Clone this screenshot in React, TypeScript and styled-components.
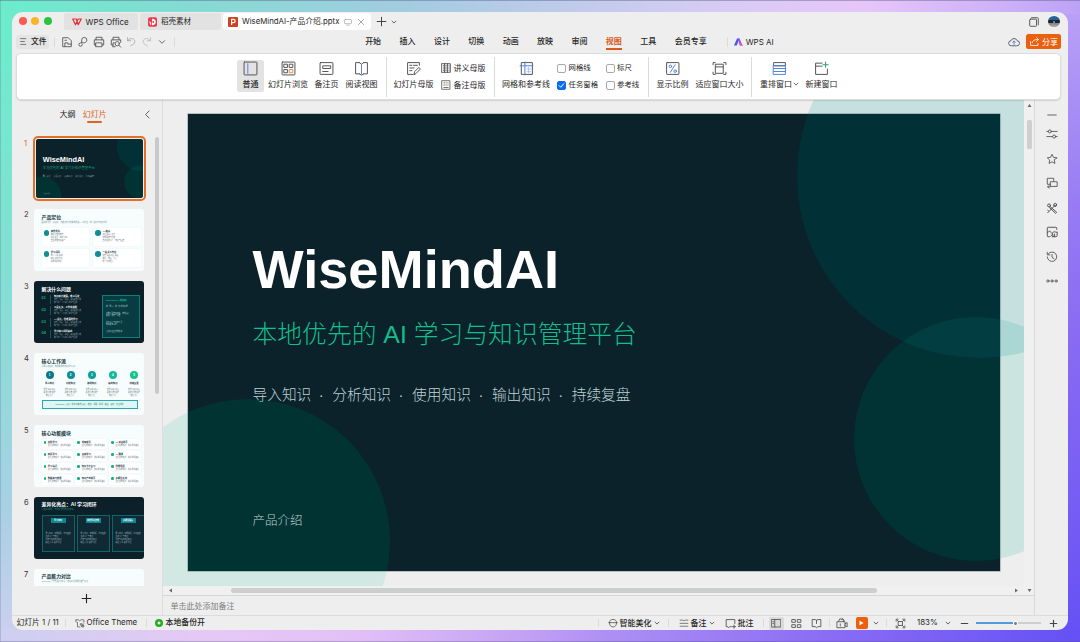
import React from "react";
import styled, { createGlobalStyle, css } from "styled-components";

const UI = `Inter, "Noto Sans CJK SC", sans-serif`;
const SLIDE = `"Liberation Sans", "Noto Sans CJK SC", sans-serif`;

const Global = createGlobalStyle`
  html, body { margin: 0; padding: 0; overflow: hidden; }
  *, *::before, *::after { box-sizing: border-box; }
  body { font-family: ${UI}; font-size: 8px; line-height: 1; color: #262626; }
`;

/* ---------- shell ---------- */

const Desktop = styled.div`
  width: 1080px;
  height: 642px;
  padding: 12px;
  box-shadow: inset 0 1px 0 rgba(90, 100, 130, 0.45), inset 1px 0 0 rgba(90, 100, 130, 0.25),
    inset 0 -1px 0 rgba(90, 80, 130, 0.35);
  background:
    linear-gradient(90deg, #6beccb 0%, #82dcd2 16%, #a2cce0 37%, #c0cbec 53%, #d8cbf5 67%, #e6c6fa 80%, #cdb0f8 93%, #bca2f7 100%) 0 0 / 100% 14px no-repeat,
    linear-gradient(90deg, #cdd0f0 0%, #e6c8f5 20%, #e2c0f6 33%, #c4a2f4 48%, #ae90f4 56%, #8f70f4 74%, #6450f5 100%) 0 100% / 100% 14px no-repeat,
    linear-gradient(180deg, #6beccb 0%, #74e8cf 16%, #82dfd2 42%, #9ad6de 67%, #a9d0e4 80%, #cdd0f0 100%) 0 0 / 50% 100% no-repeat,
    linear-gradient(180deg, #bca2f7 0%, #a88ff5 16%, #977af4 33%, #8a6df3 50%, #7058f4 87%, #6450f5 100%) 100% 0 / 50% 100% no-repeat;
`;

const Window = styled.div`
  width: 1056px;
  height: 618px;
  display: flex;
  flex-direction: column;
  overflow: hidden;
  border-radius: 11px;
  background: #eeeeee;
  white-space: nowrap;
`;

const Icon = styled.svg.attrs<{ $s?: number }>((p) => ({
  viewBox: "0 0 14 14",
  width: p.$s ?? 12,
  height: p.$s ?? 12,
}))<{ $s?: number; $w?: number; $c?: string }>`
  display: block;
  flex: none;
  fill: none;
  stroke: ${(p) => p.$c ?? "#505050"};
  stroke-width: ${(p) => p.$w ?? 1};
  stroke-linecap: round;
  stroke-linejoin: round;
`;

const Chevron = ({ s = 6 }: { s?: number }) => (
  <Icon $s={s} $w={2}>
    <path d="M2.500 5l4.500 4.500L11.500 5" />
  </Icon>
);

const Divider = styled.i<{ $h?: number; $m?: string }>`
  flex: none;
  width: 1px;
  height: ${(p) => p.$h ?? 10}px;
  margin: ${(p) => p.$m ?? "0"};
  background: #dbdbdb;
`;

/* ---------- tab strip ---------- */

const TabStrip = styled.div`
  height: 18px;
  flex: none;
  display: flex;
  align-items: center;
  padding-left: 7px;
  padding-top: 1px;
`;

const Lights = styled.div`
  width: 45px;
  flex: none;
  display: flex;
  gap: 4.3px;
`;

const Light = styled.i<{ $c: string }>`
  width: 8px;
  height: 8px;
  margin-top: -1.5px;
  border-radius: 50%;
  background: ${(p) => p.$c};
`;

const Tab = styled.div<{ $w: number; $active?: boolean; $size?: number }>`
  width: ${(p) => p.$w}px;
  height: 17px;
  margin-right: 2px;
  padding-left: ${(p) => (p.$active ? 5 : 7.5)}px;
  display: flex;
  align-items: center;
  border-radius: ${(p) => (p.$active ? "4px" : "2px")};
  background: ${(p) => (p.$active ? "#ffffff" : "#e2e2e2")};
  font-size: ${(p) => p.$size ?? 8}px;
  & > svg { flex: none; }
`;

const TabText = styled.span<{ $w: number }>`
  width: ${(p) => p.$w}px;
  margin-left: 4px;
`;

const TabTools = styled.span`
  display: flex;
  align-items: center;
  gap: 5.5px;
  margin-left: 3.5px;
`;

const StripTools = styled.div`
  display: flex;
  align-items: center;
  gap: 4px;
  margin-left: 3px;
`;

const StripRight = styled.div`
  margin-left: auto;
  margin-right: 8px;
  display: flex;
  align-items: center;
  gap: 9px;
`;

const Avatar = styled.i`
  width: 12px;
  height: 11px;
  border-radius: 50%;
  background: radial-gradient(circle at 50% 55%, #6e8090 0 10%, transparent 14%),
    linear-gradient(180deg, #2b5f98 0 35%, #16283c 36% 62%, #8a8280 66%, #b3a9a4 100%);
`;

/* ---------- menu bar ---------- */

const MenuBar = styled.div`
  height: 23px;
  flex: none;
  display: flex;
  align-items: center;
  padding: 0 7px 0 4px;
`;

const FileButton = styled.div`
  width: 33px;
  height: 14px;
  padding-left: 3px;
  display: flex;
  align-items: center;
  gap: 3px;
  border-radius: 3px;
  background: #e4e4e4;
  font-size: 7.8px;
  font-weight: 500;
`;

const QuickTools = styled.div`
  display: flex;
  align-items: center;
  gap: 4.2px;
`;

const Menus = styled.div`
  display: flex;
  align-items: center;
  gap: 18.4px;
  margin-left: 190px;
`;

const Menu = styled.span<{ $active?: boolean }>`
  height: 16px;
  display: flex;
  align-items: center;
  font-weight: 500;
  border-top: 1.5px solid transparent;
  border-bottom: 2px solid transparent;
  ${(p) =>
    p.$active &&
    css`
      color: #d9591a;
      font-weight: 700;
      border-bottom-color: #d9591a;
    `}
`;

const AiEntry = styled.span`
  display: flex;
  align-items: center;
  gap: 3px;
  font-size: 8px;
`;

const MenuRight = styled.div`
  margin-left: auto;
  display: flex;
  align-items: center;
  gap: 6px;
`;

const ShareButton = styled.div`
  width: 35px;
  height: 15px;
  display: flex;
  align-items: center;
  justify-content: center;
  gap: 2px;
  border-radius: 2.5px;
  background: #ea600f;
  color: #fff;
`;

/* ---------- ribbon ---------- */

const Ribbon = styled.div`
  height: 47px;
  flex: none;
  margin: 0 7px 0 4px;
  padding-left: 220px;
  display: flex;
  align-items: center;
  border: 1px solid #dcdcdc;
  border-radius: 5px;
  background: #fff;
  box-shadow: 0 1px 1.5px rgba(0, 0, 0, 0.12);
  position: relative;
  z-index: 2;
`;

const RibbonButton = styled.div<{ $w: number; $ml?: number; $active?: boolean }>`
  width: ${(p) => p.$w}px;
  height: 32px;
  flex: none;
  margin: -1px 0 0 ${(p) => p.$ml ?? 0}px;
  padding-top: 1px;
  display: flex;
  flex-direction: column;
  align-items: center;
  gap: 1.5px;
  border-radius: 2.5px;
  background: ${(p) => (p.$active ? "#e3e3e3" : "transparent")};
  font-weight: ${(p) => (p.$active ? 500 : 400)};
`;

const RibbonLabel = styled.span`
  height: 12px;
  display: flex;
  align-items: center;
  gap: 1px;
`;

const RibbonStack = styled.div<{ $w: number; $ml?: number }>`
  width: ${(p) => p.$w}px;
  margin-left: ${(p) => p.$ml ?? 0}px;
  flex: none;
  display: flex;
  flex-direction: column;
  gap: 5px;
`;

const StackItem = styled.div<{ $size?: number }>`
  height: 12px;
  display: flex;
  align-items: center;
  gap: 2.5px;
  font-size: ${(p) => p.$size ?? 8}px;
`;

const Check = styled.i<{ $on?: boolean }>`
  width: 9px;
  height: 9px;
  display: flex;
  align-items: center;
  justify-content: center;
  border-radius: 2px;
  border: 1px solid ${(p) => (p.$on ? "#0a6cf0" : "#a8a8a8")};
  background: ${(p) => (p.$on ? "#0a6cf0" : "#fff")};
`;

/* ---------- body ---------- */

const Body = styled.div`
  height: 515px;
  flex: none;
  display: flex;
`;

const SlidePanel = styled.aside`
  width: 151px;
  flex: none;
  display: flex;
  flex-direction: column;
  border-right: 1px solid #dedede;
`;

const PanelHeader = styled.div`
  height: 36px;
  flex: none;
  display: flex;
  align-items: flex-start;
  gap: 7px;
  padding: 8px 0 0 47px;
`;

const PanelTab = styled.span<{ $w: number; $active?: boolean }>`
  width: ${(p) => p.$w}px;
  height: 14px;
  display: flex;
  flex-direction: column;
  align-items: center;
  gap: 0.5px;
  line-height: 12.5px;
  color: ${(p) => (p.$active ? "#dc651f" : "#262626")};
  &::after {
    content: "";
    width: 15px;
    height: 2px;
    flex: none;
    border-radius: 1px;
    background: ${(p) => (p.$active ? "#dc651f" : "transparent")};
  }
`;

const PanelCollapse = styled.span`
  margin: 2px 0 0 29px;
`;

const ThumbScroller = styled.div`
  height: 450px;
  flex: none;
  display: flex;
  overflow: hidden;
`;

const ThumbList = styled.div`
  width: 141px;
  height: 450px;
  overflow: hidden;
  display: flex;
  flex-direction: column;
`;

const ThumbRow = styled.div`
  height: 71.9px;
  flex: none;
  display: flex;
  padding-left: 12px;
`;

const ThumbNo = styled.span<{ $active?: boolean }>`
  width: 8.5px;
  padding-top: 3.5px;
  font-size: 7.5px;
  color: ${(p) => (p.$active ? "#dc651f" : "#333")};
`;

const ThumbFrame = styled.div<{ $active?: boolean }>`
  width: 113px;
  height: 65px;
  flex: none;
  padding: ${(p) => (p.$active ? "1px" : "1.5px")};
  border-radius: 5px;
  border: ${(p) => (p.$active ? "2px solid #e2702a" : "0")};
`;

const ThumbPage = styled.div<{ $dark?: boolean }>`
  width: 100%;
  height: 100%;
  overflow: hidden;
  border-radius: 3px;
  font-family: ${SLIDE};
  background: ${(p) => (p.$dark ? "#0b2029" : "#f6fdfc")};
  color: ${(p) => (p.$dark ? "#ffffff" : "#12303a")};
  padding: 5.5px 3px 0 7.5px;
  display: flex;
  flex-direction: column;
`;

const ThumbCover = styled(ThumbPage)`
  padding: 0;
  background: #0b222a;
`;

const CoverScale = styled.div`
  width: 812px;
  height: 457px;
  margin: -1.5px 0 0 -2px;
  transform: scale(0.1354);
  transform-origin: 0 0;
`;

const PanelScrollbar = styled.i`
  width: 4px;
  height: 257px;
  margin: 1px 0 0 1.5px;
  border-radius: 2px;
  background: #c9c9c9;
`;

const AddSlide = styled.div`
  height: 25px;
  padding-right: 2px;
  display: flex;
  align-items: center;
  justify-content: center;
`;

/* ---------- thumbnail contents ---------- */

const TTitle = styled.div`
  font-size: 4.9px;
  line-height: 6px;
  height: 6px;
  font-weight: 700;
`;
const TSub = styled.div<{ $c?: string }>`
  height: 3px;
  line-height: 3px;
  font-size: 1.9px;
  color: ${(p) => p.$c ?? "#6d8a8e"};
`;
const THead = styled.div<{ $c?: string }>`
  font-size: 2.3px;
  line-height: 3px;
  font-weight: 700;
  color: ${(p) => p.$c ?? "inherit"};
`;
const TLine = styled.div<{ $c?: string; $lh?: number }>`
  font-size: 1.8px;
  line-height: ${(p) => p.$lh ?? 2.9}px;
  color: ${(p) => p.$c ?? "#5d7276"};
`;

const TGrid = styled.div<{ $cols: number; $gap: string; $mt: number; $rows: string }>`
  display: grid;
  grid-template-columns: repeat(${(p) => p.$cols}, 1fr);
  grid-auto-rows: ${(p) => p.$rows};
  gap: ${(p) => p.$gap};
  margin-top: ${(p) => p.$mt}px;
`;
const TCard = styled.div`
  display: flex;
  gap: 1.8px;
  padding: 2.5px 2px;
  overflow: hidden;
  background: #fff;
  box-shadow: 0 0 1px rgba(20, 120, 120, 0.18);
  border-radius: 1px;
`;
const TDot = styled.i<{ $s: number; $c: string }>`
  width: ${(p) => p.$s}px;
  height: ${(p) => p.$s}px;
  flex: none;
  border-radius: 50%;
  background: ${(p) => p.$c};
`;

const TSplit = styled.div`
  display: flex;
  justify-content: space-between;
  margin-top: 2px;
  padding-right: 1px;
`;
const TProblems = styled.div`
  display: flex;
  flex-direction: column;
  gap: 2.6px;
`;
const TProblem = styled.div`
  height: 9px;
  display: flex;
  align-items: center;
`;
const TIndex = styled.b`
  width: 8.5px;
  font-size: 3.8px;
  color: #10b08e;
`;
const TProblemText = styled.div`
  padding-left: 3px;
  border-left: 0.5px solid #1c5560;
`;
const TAside = styled.div`
  width: 38px;
  height: 43px;
  display: flex;
  flex-direction: column;
  gap: 3.2px;
  padding: 3.5px 3px;
  border: 0.7px solid #0e7d7b;
  background: #073c42;
`;

const TFlow = styled.div`
  display: flex;
  justify-content: space-between;
  margin: 3.7px -3px 0 -2px;
`;
const TStep = styled.div`
  width: 20px;
  display: flex;
  flex-direction: column;
  align-items: center;
  overflow: hidden;
`;
const TBall = styled.i<{ $c: string }>`
  width: 8px;
  height: 8px;
  margin-bottom: 3px;
  border-radius: 50%;
  background: ${(p) => p.$c};
  color: #fff;
  font: 700 3px/8px ${SLIDE};
  text-align: center;
`;
const TBanner = styled.div`
  width: 96px;
  height: 9px;
  margin-top: 3.5px;
  display: flex;
  align-items: center;
  justify-content: center;
  border: 0.8px solid #2aa8ab;
  background: #dff6f4;
  font-size: 1.9px;
  color: #0f7a80;
`;
const TPanels = styled.div`
  display: flex;
  gap: 2px;
  margin-top: 3.5px;
  margin-right: -3px;
`;
const TPanel = styled.div`
  width: 33px;
  height: 37px;
  flex: none;
  padding: 2.5px 3px;
  border: 0.7px solid #0d6668;
  background: #102a35;
`;
const TPill = styled.div`
  width: 15px;
  height: 4.5px;
  margin: 0 auto 9px;
  background: #0b8791;
  font-size: 2px;
  line-height: 4.5px;
  font-weight: 700;
  text-align: center;
`;

/* ---------- canvas ---------- */

const Center = styled.main`
  width: 872px;
  flex: none;
  display: flex;
  flex-direction: column;
  border-right: 1px solid #d9d9d9;
`;

const Stage = styled.div`
  height: 486px;
  flex: none;
  display: flex;
`;

const Canvas = styled.div`
  width: 861px;
  height: 486px;
  overflow: hidden;
  padding: 14px 0 0 24.5px;
`;

const SlideBox = styled.section`
  position: relative;
  width: 812px;
  height: 457px;
  padding: 122.5px 0 0 65px;
  display: flex;
  flex-direction: column;
  font-family: ${SLIDE};
`;

/* Decorative discs overlap the slide edge and spill onto the pasteboard. */
const Disc = styled.i<{ $x: number; $y: number; $r: number; $c: string }>`
  position: absolute;
  left: ${(p) => p.$x - p.$r}px;
  top: ${(p) => p.$y - p.$r}px;
  width: ${(p) => p.$r * 2}px;
  height: ${(p) => p.$r * 2}px;
  overflow: hidden;
  border-radius: 50%;
  background: ${(p) => p.$c};
`;

const Backdrop = styled.div<{ $edge?: boolean }>`
  position: absolute;
  inset: 0;
  overflow: hidden;
  background: #0b222a;
  box-shadow: ${(p) => (p.$edge ? "0 0 0 0.6px rgba(90,110,115,.6)" : "none")};
`;

const CoverTitle = styled.h1`
  position: relative;
  margin: 0;
  height: 64px;
  font-size: 54.2px;
  line-height: 64px;
  font-weight: 700;
  color: #fff;
`;
const CoverSub = styled.p`
  position: relative;
  margin: 17px 0 0;
  height: 34px;
  font-size: 24.8px;
  line-height: 34px;
  font-weight: 300;
  color: #12bd8e;
`;
const CoverTags = styled.p`
  position: relative;
  display: flex;
  margin: 33px 0 0;
  height: 22px;
  font-size: 14.7px;
  line-height: 21px;
  font-weight: 300;
  color: #bdd1d5;
`;
const CoverTag = styled.span`
  width: 79.8px;
  display: flex;
  &:not(:last-child)::after {
    content: "·";
    width: 20px;
    text-align: center;
  }
`;
const CoverFoot = styled.p`
  position: relative;
  margin: 105.5px 0 0;
  height: 18px;
  font-size: 12.5px;
  line-height: 18px;
  font-weight: 300;
  color: #bdd1d5;
`;

const VScroll = styled.div`
  width: 10px;
  height: 486px;
  display: flex;
  flex-direction: column;
  align-items: center;
  padding-top: 3px;
  background: #f0f0f0;
`;
const VThumb = styled.i`
  width: 5px;
  height: 29px;
  margin-top: 12px;
  border-radius: 1.5px;
  background: #cfcfcf;
`;
const HScroll = styled.div`
  height: 9px;
  flex: none;
  display: flex;
  align-items: center;
  padding: 0 2px 0 5px;
  background: #f0f0f0;
`;
const HThumb = styled.i`
  width: 646px;
  height: 5px;
  margin: 0 136.5px 0 58px;
  border-radius: 2.5px;
  background: #cdcfce;
`;
const Arrow = styled.svg.attrs({ viewBox: "0 0 5 5", width: 5, height: 5 })<{ $r: number }>`
  display: block;
  flex: none;
  fill: #6a6a6a;
  transform: rotate(${(p) => p.$r}deg);
`;
const HArrows = styled.div`
  display: flex;
  gap: 8px;
`;
const Notes = styled.div`
  flex: 1;
  display: flex;
  align-items: center;
  padding-left: 7.5px;
  border-top: 1px solid #d6d6d6;
  color: #7d7d7d;
`;

const SideRail = styled.nav`
  flex: 1;
  display: flex;
  flex-direction: column;
  align-items: center;
  padding-top: 8.5px;
  gap: 12.5px;
  & > :first-child { margin-bottom: -4.8px; }
`;

/* ---------- status bar ---------- */

const StatusBar = styled.footer`
  flex: 1;
  display: flex;
  align-items: center;
  border-top: 1px solid #dcdcdc;
  padding-left: 4.5px;
`;
const StatusText = styled.span<{ $w: number; $ml?: number; $size?: number; $bold?: boolean }>`
  width: ${(p) => p.$w}px;
  flex: none;
  margin-left: ${(p) => p.$ml ?? 0}px;
  font-size: ${(p) => p.$size ?? 8}px;
  font-weight: ${(p) => (p.$bold ? 500 : 400)};
`;
const StatusSlot = styled.span<{ $w: number; $on?: boolean; $ml?: number }>`
  width: ${(p) => p.$w}px;
  height: 13px;
  flex: none;
  margin-left: ${(p) => p.$ml ?? 0}px;
  display: flex;
  align-items: center;
  justify-content: center;
  border-radius: 1.5px;
  background: ${(p) => (p.$on ? "#dadada" : "transparent")};
`;
const BackupDot = styled.i`
  width: 8px;
  height: 8px;
  margin-left: 8px;
  border-radius: 50%;
  background: radial-gradient(circle, #fff 0 1.3px, #1fae1f 1.7px);
`;
const PlayButton = styled.span`
  width: 12px;
  height: 12px;
  flex: none;
  margin-left: 8px;
  display: flex;
  align-items: center;
  justify-content: center;
  border-radius: 2px;
  background: #ee5f0c;
`;
const Slider = styled.span`
  width: 65px;
  height: 5px;
  flex: none;
  margin-left: 7px;
  display: flex;
  align-items: center;
`;
const SliderFill = styled.i`
  width: 37px;
  height: 2px;
  background: #559bdc;
`;
const SliderKnob = styled.i`
  width: 5px;
  height: 5px;
  border-radius: 50%;
  background: radial-gradient(circle, #808080 0 1.2px, #fafafa 1.7px);
`;
const SliderRest = styled.i`
  flex: 1;
  height: 2px;
  background: #cfcfcf;
`;

/* ---------- slide artwork ---------- */

const Cover = ({ edge }: { edge?: boolean }) => (
  <SlideBox>
    <Disc $x={791.5} $y={62} $r={182} $c="rgba(0,150,150,.17)" />
    <Disc $x={788} $y={325} $r={122} $c="rgba(0,170,145,.14)" />
    <Disc $x={60} $y={426.5} $r={142} $c="rgba(0,190,150,.12)" />
    <Backdrop $edge={edge}>
      <Disc $x={791.5} $y={62} $r={182} $c="#013036" />
      <Disc $x={788} $y={325} $r={122} $c="#013234">
        <Disc $x={125.5} $y={-141} $r={182} $c="#013d41" />
      </Disc>
      <Disc $x={60} $y={426.5} $r={142} $c="#013332" />
    </Backdrop>
    <CoverTitle>WiseMindAI</CoverTitle>
    <CoverSub>本地优先的 AI 学习与知识管理平台</CoverSub>
    <CoverTags>
      {["导入知识", "分析知识", "使用知识", "输出知识", "持续复盘"].map((t) => (
        <CoverTag key={t}>{t}</CoverTag>
      ))}
    </CoverTags>
    <CoverFoot>产品介绍</CoverFoot>
  </SlideBox>
);

const Positioning = () => (
  <ThumbPage>
    <TTitle>产品定位</TTitle>
    <TSub>面向学习者、研究者、内容创作者的本地优先 AI 工作台，统一资料与知识管理</TSub>
    <TGrid $cols={2} $gap="3px 4px" $mt={4} $rows="18px">
      {[
        ["本地优先", "数据保存在本地", "隐私安全、离线可用", "自主掌控知识资产"],
        ["AI 驱动", "多模型接入支持", "智能总结与问答", "自动生成卡片、笔记与图谱"],
        ["学习闭环", "导入 分析 使用", "输出 复盘 持续", "形成知识体系"],
        ["一站式工作台", "文档 视频 网页 音频", "笔记、导图、卡片", "统一管理检索"],
      ].map(([h, ...ls]) => (
        <TCard key={h}>
          <TDot $s={5.5} $c="#0e8f98" />
          <div>
            <THead>{h}</THead>
            {ls.map((l) => (
              <TLine key={l}>{l}</TLine>
            ))}
          </div>
        </TCard>
      ))}
    </TGrid>
  </ThumbPage>
);

const Problems = () => (
  <ThumbPage $dark>
    <TTitle>解决什么问题</TTitle>
    <TSplit>
      <TProblems>
        {["知识碎片散落，难以沉淀", "工具太多，工作流割裂", "AI 强大，但难落地学习", "学习缺少闭环输出"].map((h, i) => (
          <TProblem key={h}>
            <TIndex>0{i + 1}</TIndex>
            <TProblemText>
              <THead>{h}</THead>
              <TLine $c="#8fa6ad">文档、网页、视频、音频来源分散</TLine>
              <TLine $c="#8fa6ad">缺少统一入口进行整理与回顾</TLine>
            </TProblemText>
          </TProblem>
        ))}
      </TProblems>
      <TAside>
        <THead $c="#14b890">WiseMindAI 的答案</THead>
        <TLine $c="#b4d4d4">统一导入，统一管理知识源</TLine>
        <TLine $c="#b4d4d4">多种模型自由切换，本地运行<br />总结、翻译、问答</TLine>
        <TLine $c="#b4d4d4">学习卡片与复盘工具<br />构成完整闭环</TLine>
        <TLine $c="#b4d4d4">让知识真正为你所用</TLine>
      </TAside>
    </TSplit>
  </ThumbPage>
);

const Workflow = () => (
  <ThumbPage>
    <TTitle>核心工作流</TTitle>
    <TSub>从导入到复盘，构建完整的知识学习闭环</TSub>
    <TFlow>
      {[
        ["导入知识", "#0b7886"],
        ["分析知识", "#0a8f96"],
        ["使用知识", "#0aa198"],
        ["输出知识", "#12b99c"],
        ["持续复盘", "#14c48c"],
      ].map(([h, c], i) => (
        <TStep key={h}>
          <TBall $c={c}>{i + 1}</TBall>
          <THead>{h}</THead>
          <TLine>&nbsp;</TLine>
          <TLine>文档 视频 网页</TLine>
          <TLine>总结 问答 翻译</TLine>
          <TLine>笔记 卡片</TLine>
        </TStep>
      ))}
    </TFlow>
    <TBanner>WiseMindAI 让每一次学习都有沉淀 — 收集、理解、整理、输出、复盘，持续成长</TBanner>
  </ThumbPage>
);

const Modules = () => (
  <ThumbPage>
    <TTitle>核心功能模块</TTitle>
    <TGrid $cols={3} $gap="1.9px 2px" $mt={2} $rows="10.1px">
      {["文档学习", "视频转写", "AI 对话助手", "网页学习", "音频学习", "AI 翻译", "学习笔记", "知识卡片复习", "思维导图", "数据库与检索", "知识产出助手", "多模型支持"].map((h) => (
        <TCard key={h}>
          <TDot $s={2.5} $c="#12b083" />
          <div>
            <THead>{h}</THead>
            <TLine>支持多种格式、快速整理资料</TLine>
          </div>
        </TCard>
      ))}
    </TGrid>
  </ThumbPage>
);

const Highlights = () => (
  <ThumbPage $dark>
    <TTitle>差异化亮点：AI 学习闭环</TTitle>
    <TSub $c="#0f9a85">从收集到掌握，构建属于你的知识体系</TSub>
    <TPanels>
      {["学习闭环", "本地优先架构", "多模型融合"].map((h) => (
        <TPanel key={h}>
          <TPill>{h}</TPill>
          <TLine $c="#9fb6bb">导入知识、智能解析、学习吸收</TLine>
          <TLine $c="#9fb6bb">生成卡片与笔记</TLine>
          <TLine $c="#9fb6bb">问答与复盘结合输出</TLine>
          <TLine $c="#9fb6bb">输出 分享 复盘 持续</TLine>
        </TPanel>
      ))}
    </TPanels>
  </ThumbPage>
);

const Compare = () => (
  <ThumbPage>
    <TTitle>产品能力对比</TTitle>
    <TSub>WiseMindAI 与常见学习工具、笔记工具的能力差异对比</TSub>
  </ThumbPage>
);

const pages = [
  <ThumbCover $dark key="cover">
    <CoverScale>
      <Cover />
    </CoverScale>
  </ThumbCover>,
  <Positioning key="pos" />,
  <Problems key="prob" />,
  <Workflow key="flow" />,
  <Modules key="mod" />,
  <Highlights key="high" />,
  <Compare key="cmp" />,
];

const blue = "#4a7fe0";

export default function App() {
  return (
    <>
      <Global />
      <Desktop>
        <Window>
          <TabStrip>
            <Lights>
              <Light $c="#fb5b53" />
              <Light $c="#f8b52c" />
              <Light $c="#2ac440" />
            </Lights>
            <Tab $w={74} $size={8}>
              <svg width="10" height="8" viewBox="0 0 20 16" fill="none" stroke="#e02e33" strokeWidth="2.4" strokeLinejoin="round">
                <path d="M1.500 2h7l4 11.500L18.500 2h-6L7 13.500z" />
              </svg>
              <TabText $w={44}>WPS Office</TabText>
            </Tab>
            <Tab $w={81} $size={7.5}>
              <svg width="9.500" height="10" viewBox="0 0 10 10">
                <rect x="0" y="0" width="9.500" height="10" rx="2" fill="#ea3a4c" />
                <path d="M4.200 1.500c3 0 4 1.600 4 3.500S7 8.500 4.200 8.500z" fill="#fff" />
                <path d="M1.400 4l2 1.400v3C2 8 1.400 6.500 1.400 4z" fill="#fff" opacity=".85" />
                <circle cx="5.600" cy="5" r="1" fill="#ea3a4c" />
              </svg>
              <TabText $w={32}>稻壳素材</TabText>
            </Tab>
            <Tab $w={148} $active $size={7.8}>
              <svg width="10" height="10" viewBox="0 0 10 10">
                <rect width="10" height="10" rx="1.200" fill="#d2401f" />
                <path d="M3.600 8V2.400h1.900a1.650 1.650 0 010 3.300H3.600" fill="none" stroke="#fff" strokeWidth="1.200" />
              </svg>
              <TabText $w={98}>WiseMindAI-产品介绍.pptx</TabText>
              <TabTools>
                <Icon $s={8} $c="#8a8a8a">
                  <path d="M2.500 2.500h9a1.500 1.500 0 011.500 1.500v4.500a1.500 1.500 0 01-1.500 1.500h-9A1.500 1.500 0 011 8.500V4a1.500 1.500 0 011.500-1.500zM5 12.500h4" />
                </Icon>
                <Icon $s={8} $c="#8a8a8a" $w={1.3}>
                  <path d="M2.500 2.500l9 9M11.500 2.500l-9 9" />
                </Icon>
              </TabTools>
            </Tab>
            <StripTools>
              <Icon $s={11} $c="#444" $w={1.3}>
                <path d="M7 1.500v11M1.500 7h11" />
              </Icon>
              <Chevron />
            </StripTools>
            <StripRight>
              <Icon $s={10} $w={1.3}>
                <rect x="1" y="3" width="9.500" height="10" rx="1" />
                <path d="M3.500 1H12a1 1 0 011 1v9" />
              </Icon>
              <Avatar />
            </StripRight>
          </TabStrip>

          <MenuBar>
            <FileButton>
              <Icon $s={9} $w={1.1}>
                <path d="M2.500 2.500h8M2.500 7h6M2.500 11.500h8" />
              </Icon>
              文件
            </FileButton>
            <Divider $m="0 6px 0 5px" />
            <QuickTools>
              <Icon>
                <path d="M2 12V2h6.500L12 5.500V12zM4.500 12V8H8v1.500h4M4.500 5h2" />
              </Icon>
              <Icon>
                <path d="M5.500 8V4.500a3 3 0 116 .3C11.500 7 9.500 8 7.500 8H4.200a2 2 0 102 2" />
              </Icon>
              <Icon>
                <path d="M3.500 4.500v-3h7v3M3.500 10.500h-2v-6h11v6h-2M3.500 8h7v4.500h-7z" />
              </Icon>
              <Icon>
                <path d="M3.500 4.500v-3h7v3M3.500 10.500h-2v-6h11v3M3.500 12.500V8H5M3.500 12.500H6" />
                <circle cx="8.500" cy="9" r="2.500" />
                <path d="M10.500 11l2 2" />
              </Icon>
              <Icon $c="#a2a2a2" $s={11}>
                <path d="M2 2v4h4M2 6c2-3.500 8-4 9 0 .8 3-1.500 5-5 6.500" />
              </Icon>
              <Icon $c="#b8b8b8" $s={11}>
                <path d="M12 2v4H8M12 6c-2-3.500-8-4-9 0-.8 3 1.500 5 5 6.500" />
              </Icon>
              <Icon $s={12}>
                <path d="M4 5.500l3 3 3-3" />
              </Icon>
            </QuickTools>
            <Divider $m="0 0 0 6px" />
            <Menus>
              {["开始", "插入", "设计", "切换", "动画", "放映", "审阅", "视图", "工具", "会员专享"].map((m) => (
                <Menu key={m} $active={m === "视图"}>
                  {m}
                </Menu>
              ))}
            </Menus>
            <Divider $m="0 6px 0 20px" />
            <AiEntry>
              <svg width="9" height="8" viewBox="0 0 18 16">
                <path d="M0 15L6 1h5L5.500 15z" fill="#3f5bf0" />
                <path d="M7.500 1H11l6 14h-5z" fill="#8f4df2" />
                <path d="M9 9h4.500l4.500 6h-6z" fill="#f04fb4" />
              </svg>
              WPS AI
            </AiEntry>
            <MenuRight>
              <Icon $s={12}>
                <path d="M4 11.500a3 3 0 01-.5-6 3.800 3.800 0 017.200 0 3 3 0 01-.5 6z" />
                <path d="M7 10V6M5.300 7.500L7 5.800l1.700 1.700" stroke={blue} />
              </Icon>
              <ShareButton>
                <Icon $s={11} $c="#fff">
                  <path d="M2 7v5h9.500V9.500M4 8.500c.5-3 3-4 7.500-4M9.500 2L12 4.500 9.500 7" />
                </Icon>
                分享
              </ShareButton>
            </MenuRight>
          </MenuBar>

          <Ribbon>
            <RibbonButton $w={27} $active>
              <Icon $s={15} $w={0.9}>
                <rect x="1" y="1" width="12" height="12" rx="0.500" />
                <path d="M4.500 2.500v9" stroke={blue} />
              </Icon>
              <RibbonLabel>普通</RibbonLabel>
            </RibbonButton>
            <RibbonButton $w={48}>
              <Icon $s={15} $w={0.9}>
                <rect x="1" y="1" width="12" height="12" rx="0.500" />
                <path d="M3 3h3v3H3zM8 3h3v3H8zM3 8h3v3H3z" />
                <path d="M8 8h3v3H8z" stroke="#e8883a" />
              </Icon>
              <RibbonLabel>幻灯片浏览</RibbonLabel>
            </RibbonButton>
            <RibbonButton $w={29}>
              <Icon $s={15} $w={0.9}>
                <rect x="1" y="1.500" width="12" height="11" rx="0.500" />
                <path d="M10.500 4.500h-7v2.500h7zM3.500 9.800h5" />
              </Icon>
              <RibbonLabel>备注页</RibbonLabel>
            </RibbonButton>
            <RibbonButton $w={41}>
              <Icon $s={15} $w={0.9}>
                <path d="M5 1.500H1.500v10.500H5M9 1.500h3.500v10.500H9M5 1.500l2 1.500 2-1.500M5 12l2 1.200L9 12" />
                <path d="M7 3.500v8.500" stroke={blue} />
              </Icon>
              <RibbonLabel>阅读视图</RibbonLabel>
            </RibbonButton>
            <Divider $h={40} $m="0 0 0 4px" />
            <RibbonButton $w={53}>
              <Icon $s={15} $w={0.9}>
                <path d="M12.500 4V1.500h-11v11h5M3.500 4h2M7 4h3.500M3.500 6.500h4M3.500 9h2M7.500 12.500l.5-2.500 4-4 1.500 1.500-4 4z" />
              </Icon>
              <RibbonLabel>幻灯片母版</RibbonLabel>
            </RibbonButton>
            <RibbonStack $w={53} $ml={1}>
              <StackItem>
                <Icon $s={10} $w={1.3}>
                  <path d="M1 1h12v12H1zM5 1v12M9 1v12M3 4h1M3 7h1M3 10h1M6.500 4h1M6.500 7h1M6.500 10h1M11 4h.5M11 7h.5M11 10h.5" />
                </Icon>
                讲义母版
              </StackItem>
              <StackItem>
                <Icon $s={10} $w={1.1}>
                  <path d="M1.500 1h11v12h-11zM4 4h1M7 4h.5M9.500 4h.5M4 7h1M7 7h.5M9.500 7h.5M4 10.500h6" />
                </Icon>
                备注母版
              </StackItem>
            </RibbonStack>
            <Divider $h={40} />
            <RibbonButton $w={54} $ml={4}>
              <Icon $s={15} $w={0.9}>
                <path d="M2.500 1.500h10v11h-10z" />
                <path d="M1 4.500h12M5.500 1v12" stroke={blue} />
                <path d="M7.500 7.500h3.500M7.500 10h3.500M9 6v5" stroke="#a9c0ee" />
              </Icon>
              <RibbonLabel>网格和参考线</RibbonLabel>
            </RibbonButton>
            <RibbonStack $w={48.5} $ml={4}>
              <StackItem $size={7.4}>
                <Check />
                网格线
              </StackItem>
              <StackItem $size={7.4}>
                <Check $on>
                  <Icon $s={7} $c="#fff" $w={2}>
                    <path d="M2.500 7.500l3 3 6-7" />
                  </Icon>
                </Check>
                任务窗格
              </StackItem>
            </RibbonStack>
            <RibbonStack $w={42.5}>
              <StackItem $size={7.4}>
                <Check />
                标尺
              </StackItem>
              <StackItem $size={7.4}>
                <Check />
                参考线
              </StackItem>
            </RibbonStack>
            <Divider $h={40} />
            <RibbonButton $w={47}>
              <Icon $s={15} $w={0.9}>
                <rect x="1.500" y="1.500" width="11.500" height="11" rx="0.500" />
                <path d="M9.500 3.500l-4.500 7" stroke={blue} />
                <circle cx="5" cy="5" r="1.200" stroke={blue} />
                <circle cx="9.500" cy="9.500" r="1.200" stroke={blue} />
              </Icon>
              <RibbonLabel>显示比例</RibbonLabel>
            </RibbonButton>
            <RibbonButton $w={47}>
              <Icon $s={15} $w={0.9}>
                <path d="M1 3.500V1.500h2M11 1.500h2v2M13 10.500v2h-2M3 12.500H1v-2M3.500 3h7v8.500h-7zM3.500 5.500h7" />
              </Icon>
              <RibbonLabel>适应窗口大小</RibbonLabel>
            </RibbonButton>
            <Divider $h={40} $m="0 0 0 8px" />
            <RibbonButton $w={55}>
              <Icon $s={15} $w={0.9}>
                <path d="M1.500 4.200V1.500h11v2.700z" />
                <path d="M1.500 4.200h11v8.300h-11zM1.500 7h11M1.500 9.800h11" stroke={blue} />
              </Icon>
              <RibbonLabel>
                重排窗口
                <Chevron />
              </RibbonLabel>
            </RibbonButton>
            <RibbonButton $w={29}>
              <Icon $s={15} $w={0.9}>
                <path d="M7.500 2H1.500v10.500h11V7.500M1.500 4.800h6" />
                <path d="M10.800 1v5M8.300 3.500h5" stroke="#2c9a6a" />
              </Icon>
              <RibbonLabel>新建窗口</RibbonLabel>
            </RibbonButton>
          </Ribbon>

          <Body>
            <SlidePanel>
              <PanelHeader>
                <PanelTab $w={17}>大纲</PanelTab>
                <PanelTab $w={23.5} $active>
                  幻灯片
                </PanelTab>
                <PanelCollapse>
                  <Icon $s={9} $w={1.4}>
                    <path d="M9.500 1.500L4 7l5.500 5.500" />
                  </Icon>
                </PanelCollapse>
              </PanelHeader>
              <ThumbScroller>
                <ThumbList>
                  {pages.map((page, i) => (
                    <ThumbRow key={i}>
                      <ThumbNo $active={i === 0}>{i + 1}</ThumbNo>
                      <ThumbFrame $active={i === 0}>{page}</ThumbFrame>
                    </ThumbRow>
                  ))}
                </ThumbList>
                <PanelScrollbar />
              </ThumbScroller>
              <AddSlide>
                <Icon $s={11} $c="#222" $w={1.4}>
                  <path d="M7 1.500v11M1.500 7h11" />
                </Icon>
              </AddSlide>
            </SlidePanel>

            <Center>
              <Stage>
                <Canvas>
                  <Cover edge />
                </Canvas>
                <VScroll>
                  <Arrow $r={0}>
                    <path d="M2.500 1L4.500 4H.5z" />
                  </Arrow>
                  <VThumb />
                </VScroll>
              </Stage>
              <HScroll>
                <Arrow $r={-90}>
                  <path d="M2.500 1L4.500 4H.5z" />
                </Arrow>
                <HThumb />
                <HArrows>
                  <Arrow $r={90}>
                    <path d="M2.500 1L4.500 4H.5z" />
                  </Arrow>
                  <Arrow $r={180}>
                    <path d="M2.500 1L4.500 4H.5z" />
                  </Arrow>
                </HArrows>
              </HScroll>
              <Notes>单击此处添加备注</Notes>
            </Center>

            <SideRail>
              <Icon>
                <path d="M2 7h10" />
              </Icon>
              <Icon>
                <circle cx="4.500" cy="4" r="1.800" />
                <circle cx="9.500" cy="10" r="1.800" />
                <path d="M1 4h1.500M6.500 4H13M1 10h6.500M11.500 10H13" />
              </Icon>
              <Icon>
                <path d="M12.500 5.600l-3.800-.5L7 1.500 5.300 5.100l-3.800.5 2.800 2.700-.7 3.900L7 10.300l3.400 1.900-.7-3.900z" />
              </Icon>
              <Icon>
                <path d="M5 8.500H1.500v-7H9v3M5.500 5.500h7.500V11H5.500zM2 11.500h3M3.500 10l-1.500 1.500L3.500 13" />
              </Icon>
              <Icon $w={1.1}>
                <path d="M2 12.500L9.500 5M5 5.500l7.500 6.500-1.300 1.200L4 6.500M8.500 3.500l2 2L12.500 4M2 9.500l1 1" />
                <circle cx="3.500" cy="4" r="1.700" />
                <circle cx="10.800" cy="3" r="1.500" />
              </Icon>
              <Icon $w={1.1}>
                <path d="M4 12.500H2.500a1 1 0 01-1-1v-9a1 1 0 011-1h9a1 1 0 011 1V4M2 7.500c2-2.500 3.500-2 4 .5M5.500 12c2.500-1 1.500-4 3-5s2.500.8 4.500.2M7.500 12.500h4a1.500 1.500 0 001.500-1.500V7.500M10 9.500v3M8 10v2.500" />
              </Icon>
              <Icon>
                <path d="M2.500 3.500a5.500 5.500 0 11-1 3.500M1.500 1.500v3h3M7 4v3.500l2.500 1.500" />
              </Icon>
              <Icon>
                <circle cx="2.200" cy="7" r="1.300" />
                <circle cx="7" cy="7" r="1.300" />
                <circle cx="11.800" cy="7" r="1.300" />
              </Icon>
            </SideRail>
          </Body>

          <StatusBar>
            <StatusText $w={43} $size={7.8}>幻灯片 1 / 11</StatusText>
            <Divider $h={8} $m="0 0 0 5px" />
            <StatusSlot $w={10} $ml={9}>
              <Icon $s={10}>
                <path d="M1.500 2.500h3l2 1.500 2-1.500h3.500l1 2.500-1.500.8M3.500 7v5.500h3M1.500 2.500L1 5l2.500 1.500M8 8h2v2H8zM10.500 10.500h2v2h-2zM8.500 12.500L12.500 8" />
              </Icon>
            </StatusSlot>
            <StatusText $w={52} $ml={2} $size={7.9}>Office Theme</StatusText>
            <Divider $h={8} $m="0 0 0 7.500px" />
            <BackupDot />
            <StatusText $w={41} $ml={2.500} $bold $size={7.9}>本地备份开</StatusText>

            <Divider $h={8} $m="0 9px 0 391px" />
            <Icon $s={10} $w={1.1}>
              <path d="M2 6.500c0-3 2-4.500 5-4.500s5 1.500 5 4.500M1 6.500h12M2 6.500c0 4 2 6 5 6s5-2 5-6" />
            </Icon>
            <StatusText $w={34} $ml={2} $bold>智能美化</StatusText>
            <Chevron />
            <Divider $h={8} $m="0 9.500px 0 8.500px" />
            <Icon $s={10}>
              <path d="M1.500 3h4.500l1.200 1.200L8.500 3h4M1.500 7.500h11M1.500 11.500h11" />
            </Icon>
            <StatusText $w={18} $ml={2} $bold>备注</StatusText>
            <Chevron />
            <StatusSlot $w={11} $ml={10.500}>
              <Icon $s={11} $w={1.1}>
                <path d="M12.500 7V2h-11v9h2l1 1.500L6 11h2M11.500 9v4M9.500 11h4" />
              </Icon>
            </StatusSlot>
            <StatusText $w={17} $ml={1.500} $bold>批注</StatusText>
            <Divider $h={8} $m="0 0 0 8px" />
            <StatusSlot $w={15} $ml={5} $on>
              <Icon $s={10.500} $w={1.1}>
                <path d="M1 2h12v10H1zM5 2v10M2.500 5h1M2.500 7.500h1" />
              </Icon>
            </StatusSlot>
            <StatusSlot $w={20} $ml={2.500}>
              <Icon $s={11} $w={1.1}>
                <path d="M1.500 2h4v3.500h-4zM8.500 2h4v3.500h-4zM1.500 8.500h4V12h-4zM8.500 8.500h4V12h-4z" />
              </Icon>
            </StatusSlot>
            <StatusSlot $w={20}>
              <Icon $s={11} $w={1.1}>
                <path d="M7 3L5.500 2H1.500v9h4L7 12.500 8.500 11h4V2h-4zM7 3v4" />
              </Icon>
            </StatusSlot>
            <Divider $h={8} $m="0 0 0 3px" />
            <StatusSlot $w={11} $ml={6.5}>
              <Icon $s={12}>
                <path d="M1.500 5.500h9v7h-9zM10.500 8l2.500-1.500v5L10.500 10M3 5l1.500-3 4 1.500M7 1.500l2.500 2-1 2M5 8v2.500" />
              </Icon>
            </StatusSlot>
            <PlayButton>
              <svg width="5" height="6" viewBox="0 0 5 6">
                <path d="M.5.5l4 2.500-4 2.500z" fill="#fff" />
              </svg>
            </PlayButton>
            <StatusSlot $w={6} $ml={5}>
              <Chevron />
            </StatusSlot>
            <Divider $h={8} $m="0 0 0 7.500px" />
            <StatusSlot $w={11} $ml={7.5}>
              <Icon $s={11} $w={1.1}>
                <path d="M1.500 4V1.500H4M10 1.500h2.500V4M12.500 10v2.500H10M4 12.500H1.500V10M4.500 4.500h5v5h-5zM3 3l1.500 1.500M11 3L9.500 4.500M3 11l1.500-1.500M11 11L9.500 9.500" />
              </Icon>
            </StatusSlot>
            <StatusText $w={22} $ml={11.500} $size={7.900}>183%</StatusText>
            <StatusSlot $w={6} $ml={5.5}>
              <Chevron />
            </StatusSlot>
            <StatusSlot $w={9} $ml={9}>
              <Icon $s={9} $c="#444" $w={1.800}>
                <path d="M2 7h10" />
              </Icon>
            </StatusSlot>
            <Slider>
              <SliderFill />
              <SliderKnob />
              <SliderRest />
            </Slider>
            <StatusSlot $w={9} $ml={8}>
              <Icon $s={9} $c="#444" $w={1.800}>
                <path d="M7 2v10M2 7h10" />
              </Icon>
            </StatusSlot>
          </StatusBar>
        </Window>
      </Desktop>
    </>
  );
}
